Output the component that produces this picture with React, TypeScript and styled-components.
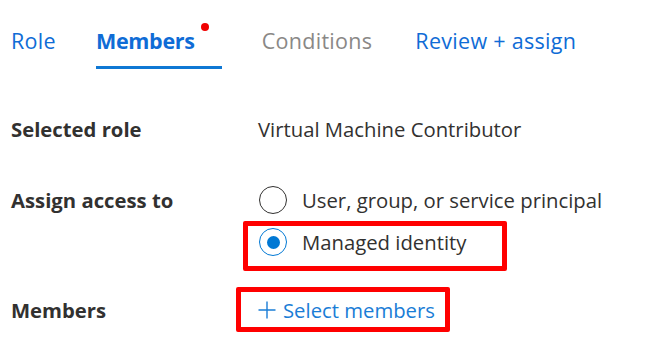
import React, { useState } from 'react'
import styled, { createGlobalStyle } from 'styled-components'

// ------------------------------------------------ style
const GlobalStyle = createGlobalStyle`
  html, body {
    margin: 0;
    padding: 0;
    background: #ffffff;
  }
  body {
    font-family: 'Open Sans', 'Noto Sans', Arial, sans-serif;
    color: #323130;
  }
`

const Page = styled.div`
  width: 647px;
  height: 345px;
  padding-left: 11px;
  box-sizing: border-box;
  overflow: hidden;
`

const TabBar = styled.div`
  display: flex;
  align-items: flex-end;
  height: 69px;
`

const Tab = styled.div<{ $active?: boolean; $muted?: boolean; $gap: number }>`
  position: relative;
  font-size: 21.5px;
  letter-spacing: ${(p) => (p.$active ? '-0.3px' : '0.3px')};
  line-height: 28px;
  padding-bottom: 11px;
  margin-right: ${(p) => p.$gap}px;
  padding-right: ${(p) => (p.$active ? '27px' : '0')};
  font-weight: ${(p) => (p.$active ? 700 : 400)};
  color: ${(p) => (p.$muted ? '#8a8886' : '#0f6cd6')};
  border-bottom: 3px solid ${(p) => (p.$active ? '#0f78d4' : 'transparent')};
  white-space: nowrap;
`

const Dot = styled.span`
  position: absolute;
  top: -4px;
  right: 13px;
  width: 8px;
  height: 8px;
  border-radius: 50%;
  background: #f00000;
`

const Form = styled.div`
  display: grid;
  grid-template-columns: 247px 1fr;
  margin-top: 46px;
  font-size: 20.3px;
  line-height: 28px;
`

const Label = styled.div<{ $gap: number }>`
  font-weight: 700;
  color: #323130;
  margin-bottom: ${(p) => p.$gap}px;
`

const Value = styled.div<{ $gap: number }>`
  color: #323130;
  margin-bottom: ${(p) => p.$gap}px;
`

const Options = styled.div`
  display: flex;
  flex-direction: column;
  gap: 14px;
  margin-bottom: 40px;
`

const Option = styled.label`
  position: relative;
  display: flex;
  align-items: center;
  gap: 15px;
  margin-left: 1px;
  cursor: pointer;
  white-space: nowrap;
`

const Circle = styled.span<{ $checked: boolean }>`
  width: 28px;
  height: 28px;
  box-sizing: border-box;
  border-radius: 50%;
  border: 1.5px solid ${(p) => (p.$checked ? '#0078d4' : '#323130')};
  display: flex;
  align-items: center;
  justify-content: center;
  flex: none;

  &::after {
    content: '';
    width: 13px;
    height: 13px;
    border-radius: 50%;
    background: ${(p) => (p.$checked ? '#0078d4' : 'transparent')};
  }
`

const Highlight = styled.span<{ $left: number; $top: number; $w: number; $h: number }>`
  position: absolute;
  left: ${(p) => p.$left}px;
  top: ${(p) => p.$top}px;
  width: ${(p) => p.$w}px;
  height: ${(p) => p.$h}px;
  border: 5px solid #ff0000;
  border-radius: 2px;
  box-sizing: border-box;
  pointer-events: none;
`

const AddButton = styled.button`
  position: relative;
  display: inline-flex;
  align-items: center;
  gap: 7px;
  padding: 0;
  border: none;
  background: none;
  font: inherit;
  line-height: 28px;
  color: #1a7dd6;
  cursor: pointer;
  white-space: nowrap;
`

const ButtonCell = styled.div`
  display: flex;
`

// ------------------------------------------------ comp
const PlusIcon = () => (
  <svg width={18} height={18} viewBox="0 0 18 18">
    <path d="M9 0.5V17.5M0.5 9H17.5" stroke="#1a7dd6" strokeWidth={1.4} fill="none" />
  </svg>
)

export default function App() {
  const [access, setAccess] = useState<'user' | 'managed'>('managed')

  return (
    <Page>
      <GlobalStyle />
      <TabBar>
        <Tab $gap={40}>Role</Tab>
        <Tab $active $gap={40}>
          Members
          <Dot />
        </Tab>
        <Tab $muted $gap={43}>Conditions</Tab>
        <Tab $gap={0}>Review + assign</Tab>
      </TabBar>

      <Form>
        <Label $gap={43}>Selected role</Label>
        <Value $gap={43}>Virtual Machine Contributor</Value>

        <Label $gap={43}>Assign access to</Label>
        <Options>
          <Option onClick={() => setAccess('user')}>
            <Circle $checked={access === 'user'} />
            User, group, or service principal
          </Option>
          <Option onClick={() => setAccess('managed')}>
            <Circle $checked={access === 'managed'} />
            Managed identity
            <Highlight $left={-16} $top={-7} $w={264} $h={50} />
          </Option>
        </Options>

        <Label $gap={0}>Members</Label>
        <ButtonCell>
          <AddButton>
            <PlusIcon />
            Select members
            <Highlight $left={-22} $top={-9} $w={214} $h={45} />
          </AddButton>
        </ButtonCell>
      </Form>
    </Page>
  )
}
